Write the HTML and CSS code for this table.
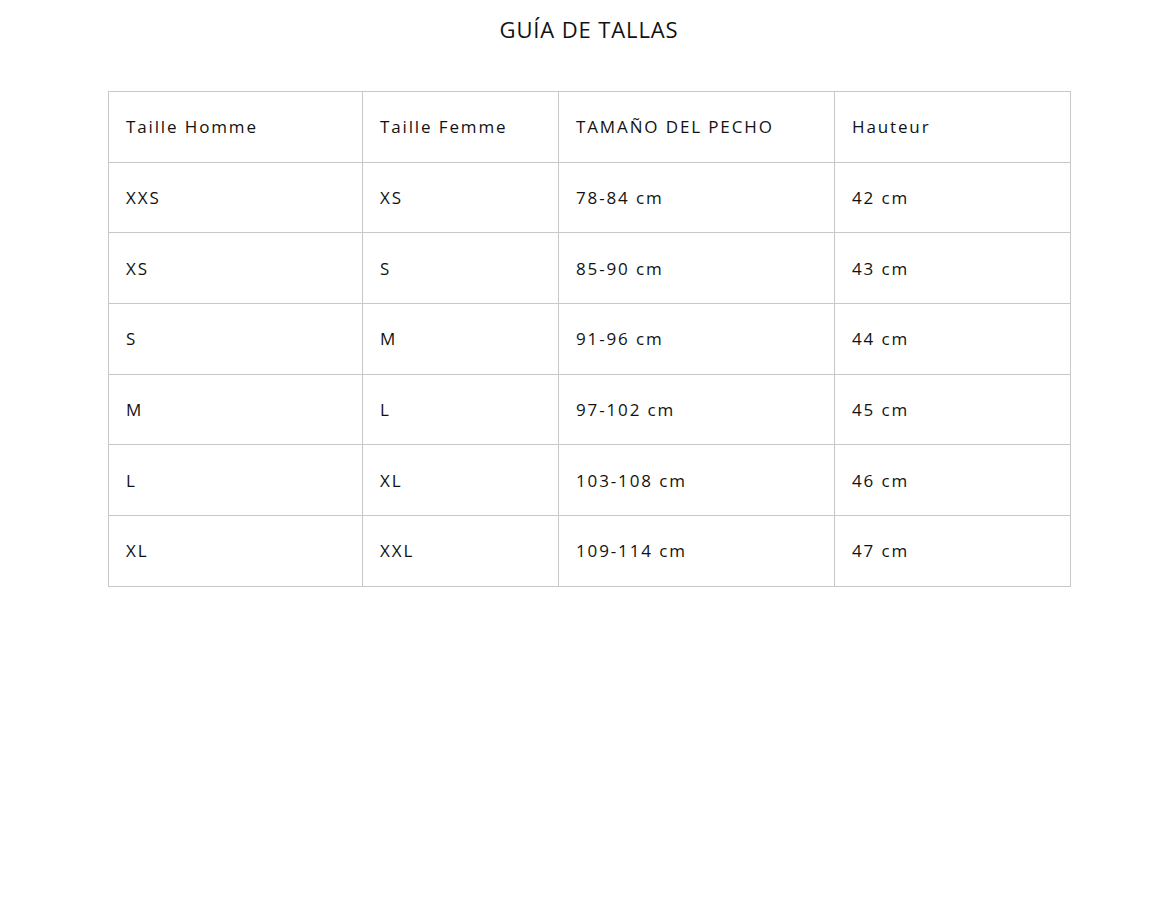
FILE: index.html
```html
<!DOCTYPE html>
<html lang="es">
<head>
<meta charset="utf-8">
<title>Guía de tallas</title>
<link rel="stylesheet" href="styles.css">
</head>
<body>
<div class="page">
  <h1 class="title">GUÍA DE TALLAS</h1>
  <table class="sizes">
    <colgroup>
      <col class="c1"><col class="c2"><col class="c3"><col class="c4">
    </colgroup>
    <tbody>
      <tr><td>Taille Homme</td><td>Taille Femme</td><td>TAMAÑO DEL PECHO</td><td>Hauteur</td></tr>
      <tr><td>XXS</td><td>XS</td><td>78-84 cm</td><td>42 cm</td></tr>
      <tr><td>XS</td><td>S</td><td>85-90 cm</td><td>43 cm</td></tr>
      <tr><td>S</td><td>M</td><td>91-96 cm</td><td>44 cm</td></tr>
      <tr><td>M</td><td>L</td><td>97-102 cm</td><td>45 cm</td></tr>
      <tr><td>L</td><td>XL</td><td>103-108 cm</td><td>46 cm</td></tr>
      <tr><td>XL</td><td>XXL</td><td>109-114 cm</td><td>47 cm</td></tr>
    </tbody>
  </table>
</div>
</body>
</html>
```
FILE: styles.css
```css
html, body {
  margin: 0;
  padding: 0;
  background: #fff;
}
body {
  padding-left: 2px;
  font-family: "Open Sans", "DejaVu Sans", sans-serif;
  color: #121212;
}
.page {
  width: 962px;
  margin: 0 auto;
  padding-top: 16px;
}
.title {
  margin: 0 0 49px;
  text-align: center;
  font-size: 22px;
  font-weight: 400;
  letter-spacing: 0.04em;
  line-height: 26px;
}
.sizes {
  width: 962px;
  border-collapse: collapse;
  table-layout: fixed;
  border: 1px solid #d9d9d9;
}
.c1 { width: 254px; }
.c2 { width: 196px; }
.c3 { width: 276px; }
.c4 { width: 236px; }
.sizes td {
  border: 1px solid #c8c8c8;
  height: 70.7px;
  box-sizing: border-box;
  padding: 0 17px;
  font-size: 17px;
  letter-spacing: 0.11em;
  vertical-align: middle;
}
```
